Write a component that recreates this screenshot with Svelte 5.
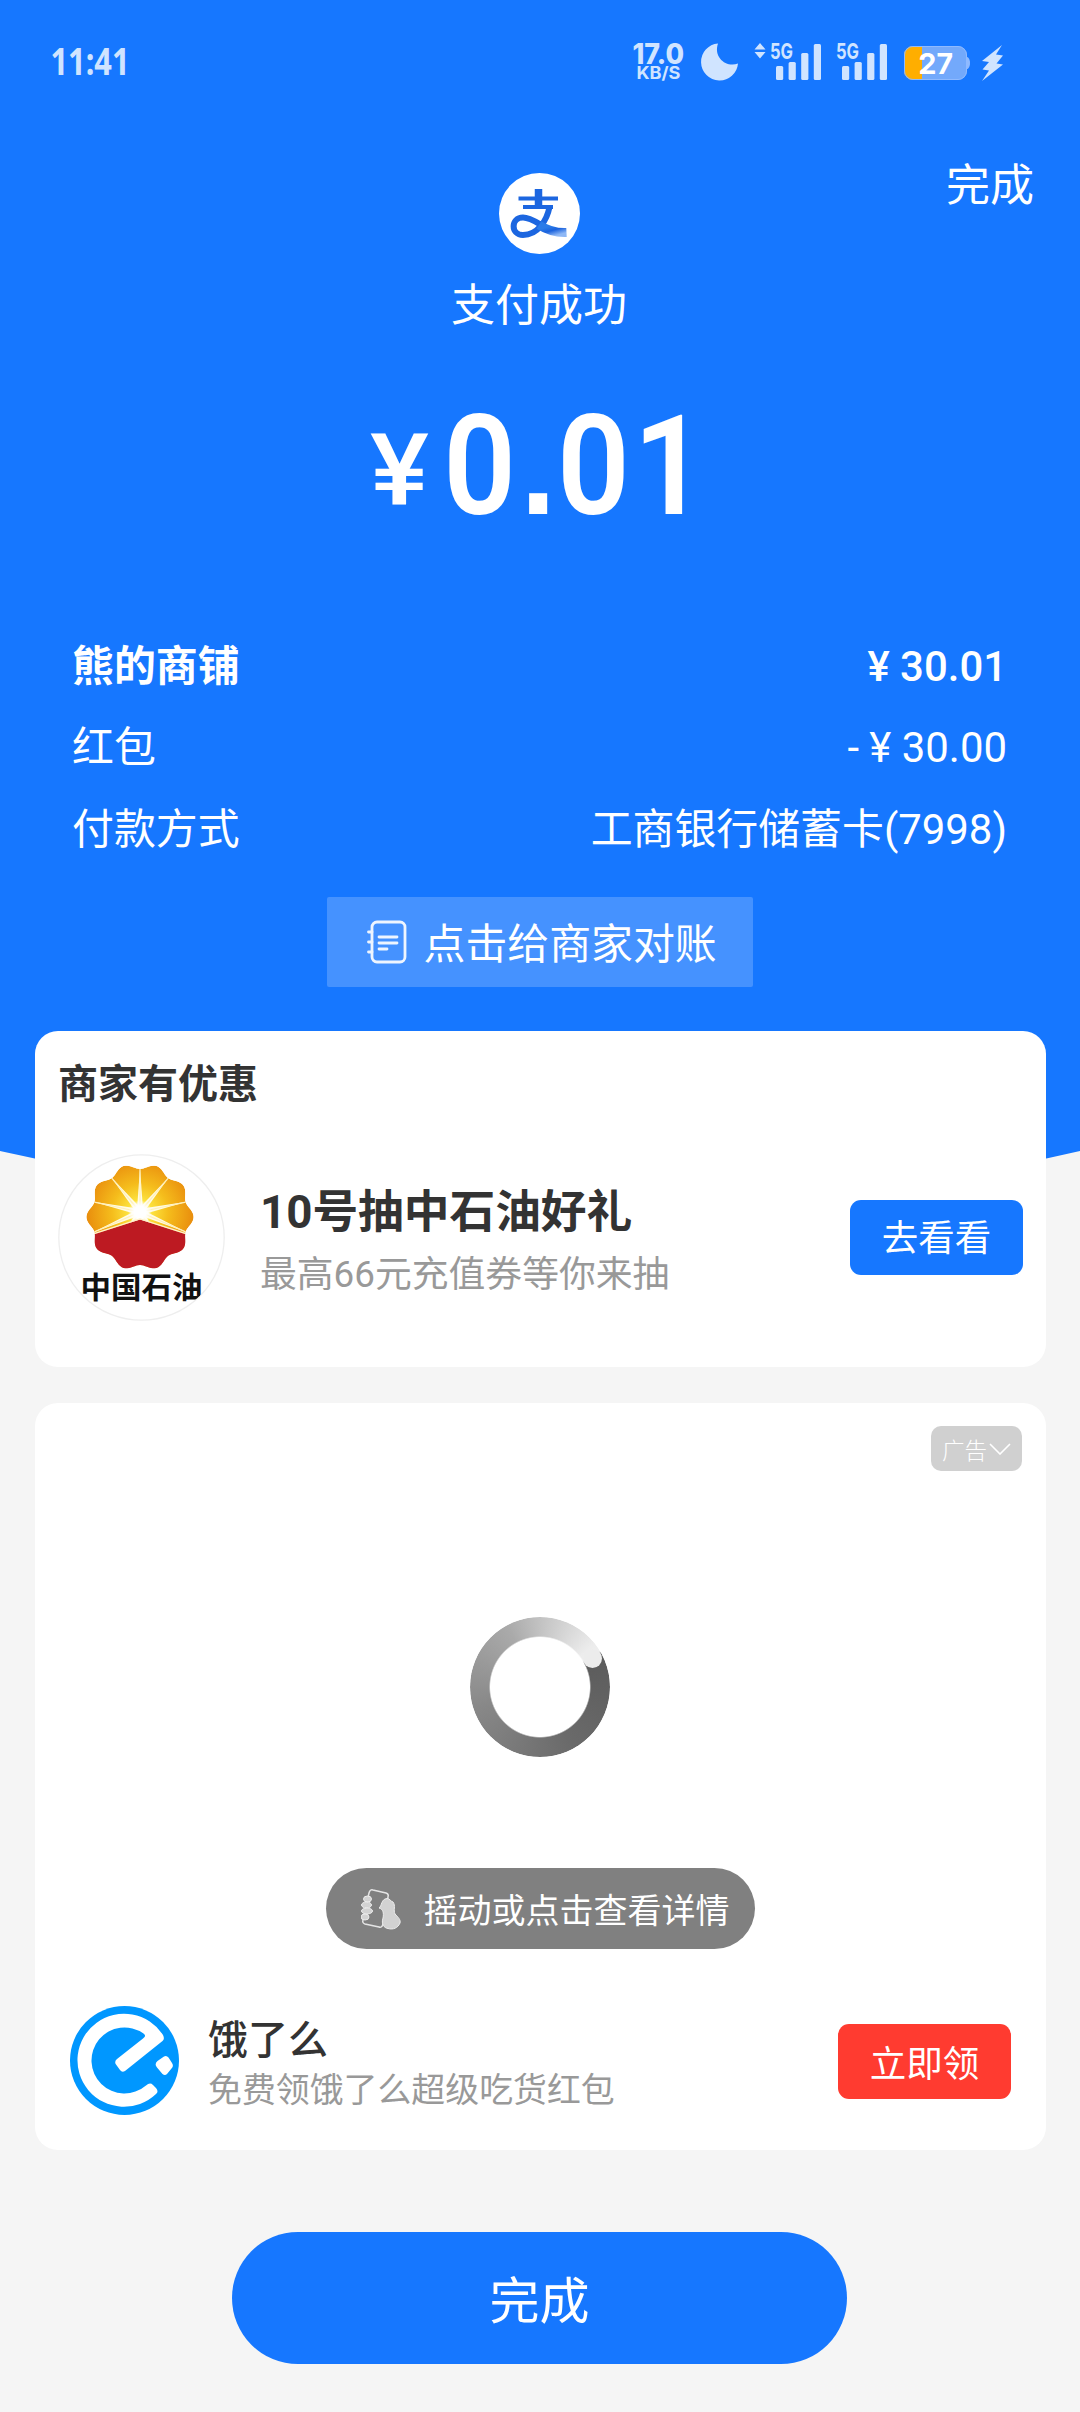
<script>
	const rows = [
		{ label: '熊的商铺', value: '¥ 30.01', strong: true },
		{ label: '红包', value: '- ¥ 30.00' },
		{ label: '付款方式', value: '工商银行储蓄卡(7998)' }
	]

	const bars = [
		{ x: 0, y: 22, h: 14 },
		{ x: 12.6, y: 18, h: 18 },
		{ x: 25.2, y: 9, h: 27 },
		{ x: 37.8, y: 0, h: 36 }
	]

	// point on a circle around the middle of the flower, angle in degrees from the top
	const polar = (r, deg, cy = 63) => {
		const a = deg * Math.PI / 180
		return `${(82 + r * Math.sin(a)).toFixed(2)} ${(cy - r * Math.cos(a)).toFixed(2)}`
	}

	const seams = Array.from({ length: 10 }, (_, i) => i * 36)

	// wavy rim with a valley on every seam
	const flower = 'M' + Array.from({ length: 180 }, (_, i) => i * 2)
		.map(a => polar(50.8 - 2.8 * Math.cos(a * Math.PI / 18), a))
		.join('L') + 'Z'
</script>

<div class="page">
	<header class="hero">
		<svg class="curve" width="1080" height="64" viewBox="0 0 1080 64" aria-hidden="true">
			<path d="M0 0V1Q540 125 1080 1V0Z" fill="#1677ff" />
		</svg>

		<div class="status">
			<svg width="90" height="60" viewBox="0 0 90 60">
				<text class="clock" x="0.5" y="45" textLength="79" lengthAdjust="spacingAndGlyphs">11:41</text>
			</svg>
			<svg width="380" height="60" viewBox="626 30 380 60" fill="#d0e4ff">
				<text class="speed" x="632.5" y="63.5" textLength="51.5" lengthAdjust="spacingAndGlyphs">17.0</text>
				<text class="unit" x="636.5" y="79" textLength="44" lengthAdjust="spacingAndGlyphs">KB/S</text>
				<path d="M718 43.5A18.5 18.5 0 1 0 738 63.5C727 68 713 58 718 43.5Z" />
				<path d="M760 43L765.5 49.5H754.5ZM760 58.5L765.5 52H754.5Z" />
				{#each [770, 836] as x}
					<text class="net" {x} y="59" textLength="23" lengthAdjust="spacingAndGlyphs">5G</text>
					{#each bars as b}
						<rect x={x + 6 + b.x} y={44 + b.y} width="7.2" height={b.h} rx="1.5" />
					{/each}
				{/each}
				<clipPath id="cell"><rect x="904" y="46" width="63" height="34" rx="9" /></clipPath>
				<g clip-path="url(#cell)">
					<rect x="904" y="46" width="63" height="34" fill="#73a9fb" />
					<rect x="904" y="46" width="18" height="34" fill="#ffae00" />
				</g>
				<rect x="904.5" y="46.5" width="62" height="33" rx="8.5" fill="none" stroke="#8fbaff" />
				<path d="M967 57C968 57 970 59 970 63C970 67 968 69 967 69Z" fill="#8fbaff" />
				<text class="charge" x="918.5" y="74" textLength="34.5" lengthAdjust="spacingAndGlyphs">27</text>
				<path d="M1002 45L982 61L989 62L982.5 69.5L989 70.5L982 81L1003 64.5L996.5 63.5L1003 55.5L996 54.5Z" />
			</svg>
		</div>

		<div class="top">
			<div class="brand">
				<svg width="81" height="81" viewBox="0 0 81 81">
					<defs>
						<linearGradient id="ink" x1="0" y1="0" x2="1" y2="1">
							<stop offset="0.3" stop-color="#2a7be8" />
							<stop offset="0.6" stop-color="#1a62dd" />
							<stop offset="1" stop-color="#8fb8f5" />
						</linearGradient>
					</defs>
					<circle cx="40.5" cy="40.5" r="40.5" fill="#fff" />
					<g fill="none" stroke="#1c66e0">
						<path d="M19.5 25.5H59" stroke-width="4" />
						<path d="M39.5 16V34" stroke-width="7.5" />
						<path d="M24 34H54" stroke-width="4" />
						<path d="M50.5 34C48 47 39 62 24 62C11.5 62 11.5 44.5 24 44.5C33 44.5 42 53 52 57" stroke-width="6" />
						<path d="M40 52C48 57 57 60 67.5 59.5" stroke="url(#ink)" stroke-width="9" />
					</g>
				</svg>
				<span>支付成功</span>
			</div>
			<button class="finish-link" type="button">完成</button>
		</div>

		<svg class="amount" width="330" height="190" viewBox="365 370 330 190">
			<text class="yen" x="370" y="505" textLength="59" lengthAdjust="spacingAndGlyphs">¥</text>
			<!-- digits are drawn narrower than the font gives them -->
			<text class="figure" transform="scale(0.91 1)" x="487 572 612 696" y="514">0<tspan class="point">.</tspan>01</text>
		</svg>

		<dl>
			{#each rows as row}
				<div class="row" class:strong={row.strong}>
					<dt>{row.label}</dt>
					<dd>{row.value}</dd>
				</div>
			{/each}
		</dl>

		<button class="reconcile" type="button">
			<svg width="41" height="44" viewBox="0 0 41 44" fill="none" stroke="#eef5ff" stroke-width="2.8" stroke-linecap="round">
				<rect x="5" y="2" width="33" height="40" rx="5" />
				<path d="M1.5 12H5M1.5 22H5M1.5 32H5M12 17H30M12 23H30M12 29H20" />
			</svg>
			<span>点击给商家对账</span>
		</button>
	</header>

	<main>
		<section class="card offers">
			<h2>商家有优惠</h2>
			<div class="offer">
				<svg class="petro" width="167" height="167" viewBox="0 0 167 167">
					<defs>
						<radialGradient id="sun" gradientUnits="userSpaceOnUse" cx="82" cy="58" r="56">
							<stop offset="0.1" stop-color="#fff04a" />
							<stop offset="0.5" stop-color="#f5bd1c" />
							<stop offset="1" stop-color="#e8890c" />
						</radialGradient>
						<radialGradient id="glow">
							<stop offset="0.5" stop-color="#fff" />
							<stop offset="1" stop-color="#fff" stop-opacity="0" />
						</radialGradient>
						<clipPath id="petals"><path d={flower} /></clipPath>
						<clipPath id="disc"><circle cx="83.5" cy="83.5" r="82.5" /></clipPath>
					</defs>
					<circle cx="83.5" cy="83.5" r="82.7" fill="#fff" stroke="#eee" stroke-width="1.3" />
					<g clip-path="url(#petals)">
						<path d={flower} fill="url(#sun)" />
						{#each seams as a}
							<path d="M{polar(3.2, a - 90, 58)}L{polar(49, a)}L{polar(3.2, a + 90, 58)}Z" fill="#fffbe6" />
							<path d="M82 58L{polar(48, a)}" stroke="#fff0b8" stroke-width="1.2" />
						{/each}
						<circle cx="82" cy="58" r="12" fill="url(#glow)" />
						<path d="M82 65.5L140 84V130H24V84Z" fill="#bd1a22" />
						<path d="M24 83.5L82 65L140 83.5" fill="none" stroke="#fff0c8" stroke-width="1.3" />
					</g>
					<g clip-path="url(#disc)">
						<text class="petro-name" x="22.5" y="143.500" textLength="122" lengthAdjust="spacingAndGlyphs">中国石油</text>
					</g>
				</svg>
				<div class="copy">
					<h3>10号抽中石油好礼</h3>
					<p>最高66元充值券等你来抽</p>
				</div>
				<button class="action" type="button">去看看</button>
			</div>
		</section>

		<section class="card ad">
			<div class="tag">
				广告
				<svg width="22" height="12" viewBox="0 0 22 12" fill="none" stroke="#fff" stroke-width="1.6">
					<path d="M1 1L11 11L21 1" />
				</svg>
			</div>

			<div class="spinner"><i></i></div>

			<button class="shake" type="button">
				<svg width="40" height="42" viewBox="0 0 40 42">
					<path d="M8 5Q9 1 12 2L25 5Q28 6 27 9L22 36Q21 40 18 39L4 36Q1 35 2 32Z" fill="none" stroke="#e4e4e4" stroke-width="1.5" />
					<g fill="#d2d2d2" stroke="#ececec" stroke-width="1">
						<ellipse cx="6.5" cy="11" rx="4" ry="3" />
						<ellipse cx="5.5" cy="17" rx="5" ry="3" />
						<ellipse cx="6" cy="23" rx="5.5" ry="3" />
						<ellipse cx="4" cy="29" rx="4" ry="3" />
						<path d="M18 20C21 18 20 11 26 10.500C29 10.500 29 13 32 14C35 18 32 22 34 26C37 29 40 32 39 35C37 40 32 42 27 40.500C23 40 20 36 22 30C23 25 22 21 18 20Z" />
					</g>
				</svg>
				摇动或点击查看详情
			</button>

			<div class="promo">
				<svg width="109" height="109" viewBox="0 0 109 109">
					<circle cx="54.5" cy="54.5" r="54.5" fill="#0097ff" />
					<g fill="#fff">
						<path d="M55 65L92.5 35Q95 33 93 29A46.5 46.5 0 1 0 86 88Q89 85.5 86 82L83 79Q80 76 76 79.5A33 33 0 1 1 73.5 27.5Q77 30 73 32.5L47 53Q44 55.5 46 58.5L50 64Q52 67 55 65Z" />
						<path d="M87.5 55L94 50.5Q96.5 49 98.5 51.5L102 57Q104 60 101.5 62.5L97 68Q95 70 92.5 68L87 61.5Q84 58 87.5 55Z" />
					</g>
				</svg>
				<div class="copy">
					<h3>饿了么</h3>
					<p>免费领饿了么超级吃货红包</p>
				</div>
				<button class="action red" type="button">立即领</button>
			</div>
		</section>

		<button class="done" type="button">完成</button>
	</main>
</div>

<style>
	:global(body) { margin: 0; background: #f5f5f5; }

	.page {
		width: 1080px;
		height: 2412px;
		overflow: hidden;
		background: #f5f5f5;
		font-family: Roboto, "Noto Sans CJK SC", sans-serif;
		color: #333;
	}
	button {
		border: none;
		padding: 0;
		margin: 0;
		font-family: inherit;
		color: #fff;
		background: transparent;
	}
	h2, h3, p, dl, dd { margin: 0; }
	svg { display: block; flex: none; }

	/* blue area */
	.hero {
		position: relative;
		box-sizing: border-box;
		height: 1151px;
		background: #1677ff;
		color: #fff;
	}
	.curve {
		position: absolute;
		left: 0;
		top: 1150px;
	}
	.status {
		display: flex;
		justify-content: space-between;
		padding: 30px 74px 0 50px;
	}
	.clock { font: 700 38px "Noto Sans", sans-serif; fill: #d0e4ff; }
	.speed { font: 800 28px Inter, sans-serif; }
	.unit { font: 700 17px Inter, sans-serif; }
	.net { font: 700 22px Inter, sans-serif; }
	.charge { font: 700 29px Inter, sans-serif; fill: #fff; }

	.top {
		display: grid;
		grid-template-columns: 1fr auto 1fr;
		align-items: start;
		height: 280px;
		padding: 0 46px;
	}
	.brand {
		grid-column: 2;
		display: flex;
		flex-direction: column;
		align-items: center;
		gap: 22px;
		padding: 83px 2px 0 0;
		font-size: 44px;
		line-height: 60px;
	}
	.finish-link {
		justify-self: end;
		padding-top: 66px;
		font-size: 44px;
		line-height: 60px;
	}
	.amount { margin-left: 365px; }
	.yen { font: 500 100px Roboto, sans-serif; fill: #fff; }
	.figure { font: 600 140px Roboto, sans-serif; fill: #fff; }
	.point { font-family: "Liberation Sans", sans-serif; font-weight: 700; }

	dl {
		padding: 65.5px 73px 0 72px;
		font-size: 41.9px;
	}
	.row {
		display: flex;
		justify-content: space-between;
		height: 81.5px;
		line-height: 81.5px;
	}
	.strong { font-weight: 500; }
	.strong dt { font-weight: 700; }
	.reconcile {
		box-sizing: border-box;
		display: flex;
		align-items: center;
		gap: 15.5px;
		width: 426px;
		height: 90px;
		margin: 27px auto 0;
		padding-left: 40px;
		border-radius: 2px;
		background: #4592ff;
		font-size: 41.9px;
	}
	.reconcile span { padding-bottom: 4px; }

	/* cards */
	main {
		position: relative;
		display: flex;
		flex-direction: column;
		gap: 36px;
		margin-top: -120px;
		padding: 0 34px 0 35px;
	}
	.card {
		box-sizing: border-box;
		border-radius: 23px;
		background: #fff;
	}
	.offers {
		height: 336px;
		padding: 24px 23px 0;
	}
	h2 {
		font-size: 40px;
		line-height: 60px;
		font-weight: 700;
	}
	.offer {
		display: flex;
		align-items: center;
		margin-top: 39px;
	}
	.copy { flex: 1; }
	.offer .copy { padding: 12px 0 0 35px; }
	.offer h3 {
		font-size: 45.7px;
		line-height: 63px;
		font-weight: 700;
	}
	.offer p {
		font-size: 36.8px;
		line-height: 62px;
		color: #999;
	}
	.petro-name { font: 700 30px "Noto Sans CJK SC", sans-serif; fill: #111; }
	.action {
		box-sizing: border-box;
		width: 173px;
		height: 75px;
		padding-bottom: 5px;
		border-radius: 11px;
		background: #1677ff;
		font-size: 36.5px;
	}
	.red {
		margin-top: 1px;
		padding-bottom: 0;
		background: #ff3b30;
	}

	.ad {
		display: flex;
		flex-direction: column;
		align-items: center;
		height: 747px;
		padding: 23px 24px 0 35px;
	}
	.tag {
		box-sizing: border-box;
		align-self: flex-end;
		display: flex;
		align-items: center;
		gap: 2px;
		width: 91px;
		height: 45px;
		padding-left: 11px;
		border-radius: 10px;
		background: #d0d0d0;
		color: #fff;
		font-size: 22.5px;
		font-weight: 300;
	}
	.spinner {
		width: 140px;
		height: 140px;
		margin: 146px 12px 0 0;
		border-radius: 50%;
		background: conic-gradient(from 62deg, #5c5c5c, #6a6a6a 90deg, #888 190deg, #aaa 270deg, #c8c8c8 305deg, #ececec 350deg, #eee 357deg, #5c5c5c);
		-webkit-mask: radial-gradient(circle, transparent 49.5px, #000 51px);
		mask: radial-gradient(circle, transparent 49.5px, #000 51px);
		overflow: hidden;
	}
	/* rounded head of the sweep */
	.spinner i {
		display: block;
		width: 19px;
		height: 19px;
		margin: 32px 0 0 113px;
		border-radius: 50%;
		background: #ececec;
	}
	.shake {
		display: flex;
		align-items: center;
		gap: 23px;
		box-sizing: border-box;
		width: 429px;
		height: 81px;
		margin: 111px 12px 0 0;
		padding-left: 35px;
		border-radius: 41px;
		background: #808080;
		font-size: 34px;
		white-space: nowrap;
	}
	.promo {
		align-self: stretch;
		display: flex;
		align-items: center;
		margin-top: 57px;
		padding-right: 11px;
	}
	.promo .copy { padding: 9px 0 0 29px; }
	.promo h3 {
		font-size: 40px;
		line-height: 52px;
		font-weight: 500;
	}
	.promo p {
		font-size: 33.9px;
		line-height: 48px;
		color: #999;
	}
	.done {
		box-sizing: border-box;
		align-self: center;
		width: 615px;
		height: 132px;
		margin: 46px 2px 0 0;
		padding-bottom: 2px;
		border-radius: 66px;
		background: #1677ff;
		font-size: 50px;
	}
</style>
